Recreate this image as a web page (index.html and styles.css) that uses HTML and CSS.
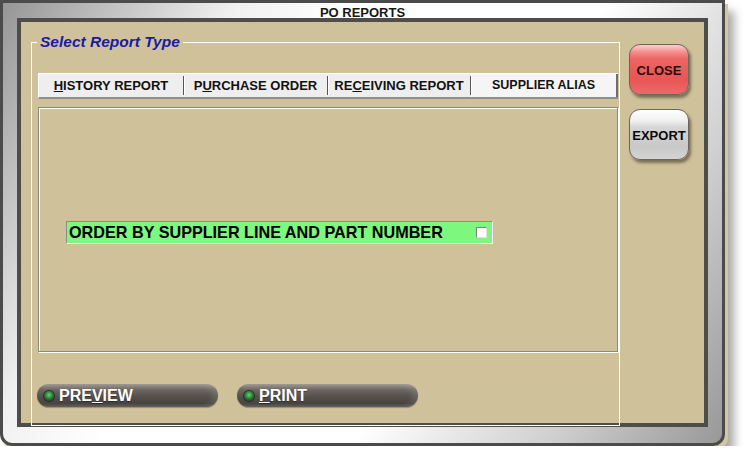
FILE: index.html
```html
<!DOCTYPE html>
<html lang="en">
<head>
    <meta charset="UTF-8">
    <meta name="viewport" content="width=device-width, initial-scale=1.0">
    <title>PO Reports</title>
    <link rel="stylesheet" href="styles.css">
</head>
<body>
    <div class="window">
        <div class="title">PO REPORTS</div>
        <div class="desk">
            <fieldset class="group">
                <legend>Select Report Type</legend>
                <div class="group-body">
                    <div class="tabs">
                        <div class="tab tab-history"><span><u>H</u>ISTORY REPORT</span></div>
                        <div class="tab tab-purchase"><span>P<u>U</u>RCHASE ORDER</span></div>
                        <div class="tab tab-receiving"><span>RE<u>C</u>EIVING REPORT</span></div>
                        <div class="tab active"><span>SUPPLIER ALIAS</span></div>
                    </div>
                    <div class="panel">
                        <label class="option"><span>ORDER BY SUPPLIER LINE AND PART NUMBER</span><span class="check"></span></label>
                    </div>
                    <div class="actions">
                        <button class="pill"><span class="led"></span><span>PRE<u>V</u>IEW</span></button>
                        <button class="pill"><span class="led"></span><span><u>P</u>RINT</span></button>
                    </div>
                </div>
            </fieldset>
            <div class="side">
                <button class="gel gel-red">CLOSE</button>
                <button class="gel gel-grey">EXPORT</button>
            </div>
        </div>
    </div>
</body>
</html>
```

FILE: styles.css
```css
body {
    margin: 0;
    background-color: #fff;
    font-family: "Liberation Sans", Arial, sans-serif;
}
.window {
    width: 725px;
    height: 446px;
    box-sizing: border-box;
    padding: 0 14px 16px;
    border: 3px solid #4b4b4b;
    border-radius: 0 0 12px 12px;
    background: linear-gradient(120deg, #969696 0%, #f0f0f0 24%, #fff 36%, #fff 62%, #d0d0d0 82%, #989898 100%);
    box-shadow: 3px 4px 0 #d3c7a1, 9px 11px 10px rgba(0, 0, 0, 0.35);
}
.title {
    height: 15px;
    line-height: 20px;
    text-align: center;
    font-size: 13px;
    font-weight: bold;
    color: #161616;
}
.desk {
    display: flex;
    height: 409px;
    box-sizing: border-box;
    padding-left: 10px;
    border: 4px solid #4e4d49;
    background-color: #cfc29b;
}
.group {
    width: 589px;
    min-inline-size: 0;
    box-sizing: border-box;
    margin: 11px 0 -3px;
    padding: 0;
    border: 1px solid #fff;
}
.group legend {
    margin-left: 5px;
    padding: 0 3px;
    font-size: 15.5px;
    line-height: 18px;
    font-weight: bold;
    font-style: italic;
    color: #1a1aa6;
}
.group-body {
    padding: 22px 1px 0 6px;
}
.tabs {
    display: flex;
    height: 23px;
    background-color: #eeeeee;
    border-top: 1px solid #fff;
    border-left: 1px solid #fff;
    border-bottom: 2px solid #8f8f8f;
}
.tab {
    display: flex;
    align-items: center;
    justify-content: center;
    box-sizing: border-box;
    margin: 2px 0;
    font-size: 13px;
    font-weight: bold;
    color: #111;
    border-right: 1px solid #555;
    box-shadow: 1px 0 0 #fff;
}
.tab-history { width: 145px; }
.tab-purchase { width: 144px; }
.tab-receiving { width: 143px; }
.tab.active {
    flex: 1;
    margin: 0;
    padding-bottom: 2px;
    font-size: 12.5px;
    background-color: #f5f5f5;
    border-right: 2px solid #6e6e6e;
    box-shadow: inset 1px 0 0 #fff;
}
.panel {
    height: 245px;
    box-sizing: border-box;
    margin-top: 8px;
    padding: 113px 0 0 27px;
    border: 1px solid #8e8877;
    box-shadow: inset 1px 1px 0 #fff, 1px 1px 0 #fff;
}
.option {
    display: flex;
    align-items: center;
    justify-content: space-between;
    width: 427px;
    height: 23px;
    box-sizing: border-box;
    padding: 0 5px 0 2px;
    background-color: #7ef77e;
    border: 1px solid;
    border-color: #8c8c8c #fff #fff #8c8c8c;
    font-size: 16.2px;
    font-weight: bold;
    color: #000;
}
.check {
    width: 11px;
    height: 11px;
    box-sizing: border-box;
    background-color: #fff;
    border: 1px solid;
    border-color: #808080 #e0e0e0 #e0e0e0 #808080;
}
.actions {
    display: flex;
    gap: 19px;
    margin: 32px 0 0 -1px;
}
.pill {
    display: flex;
    align-items: center;
    gap: 5px;
    width: 181px;
    height: 23px;
    padding: 0 0 0 7px;
    border: none;
    border-radius: 12px;
    font-family: inherit;
    font-size: 16px;
    font-weight: bold;
    color: #fff;
    text-shadow: 0 1px 1px rgba(0, 0, 0, 0.4);
    background: linear-gradient(#9a958f 0%, #6c6761 25%, #55504b 55%, #46423d 85%, #5d5853 100%);
    box-shadow: inset -5px 0 6px rgba(255, 255, 255, 0.12), 0 1px 1px rgba(0, 0, 0, 0.25);
}
.led {
    width: 10px;
    height: 10px;
    border-radius: 50%;
    background: radial-gradient(circle at 50% 40%, #6fd07a 0, #2f8c3c 40%, #1f4a23 75%, #142414 100%);
    box-shadow: 0 0 0 1px #2b2b27;
}
.side {
    display: flex;
    flex-direction: column;
    gap: 14px;
    margin: 22px 0 0 9px;
}
.gel {
    width: 60px;
    height: 51px;
    padding: 2px 0 0;
    border: 1px solid #6e645a;
    border-radius: 11px;
    font-family: inherit;
    font-size: 13px;
    font-weight: bold;
    box-shadow: 2px 3px 3px rgba(40, 30, 20, 0.5);
}
.gel-red {
    color: #2a0c0c;
    background: linear-gradient(#fbd0d0 0%, #f49090 14%, #ee6464 28%, #e85656 70%, #ec6a6a 100%);
}
.gel-grey {
    color: #0a0a0a;
    background: linear-gradient(#ffffff 0%, #f0f0f0 22%, #d6d6d6 35%, #c8c8c8 75%, #d4d4d4 100%);
}
```
